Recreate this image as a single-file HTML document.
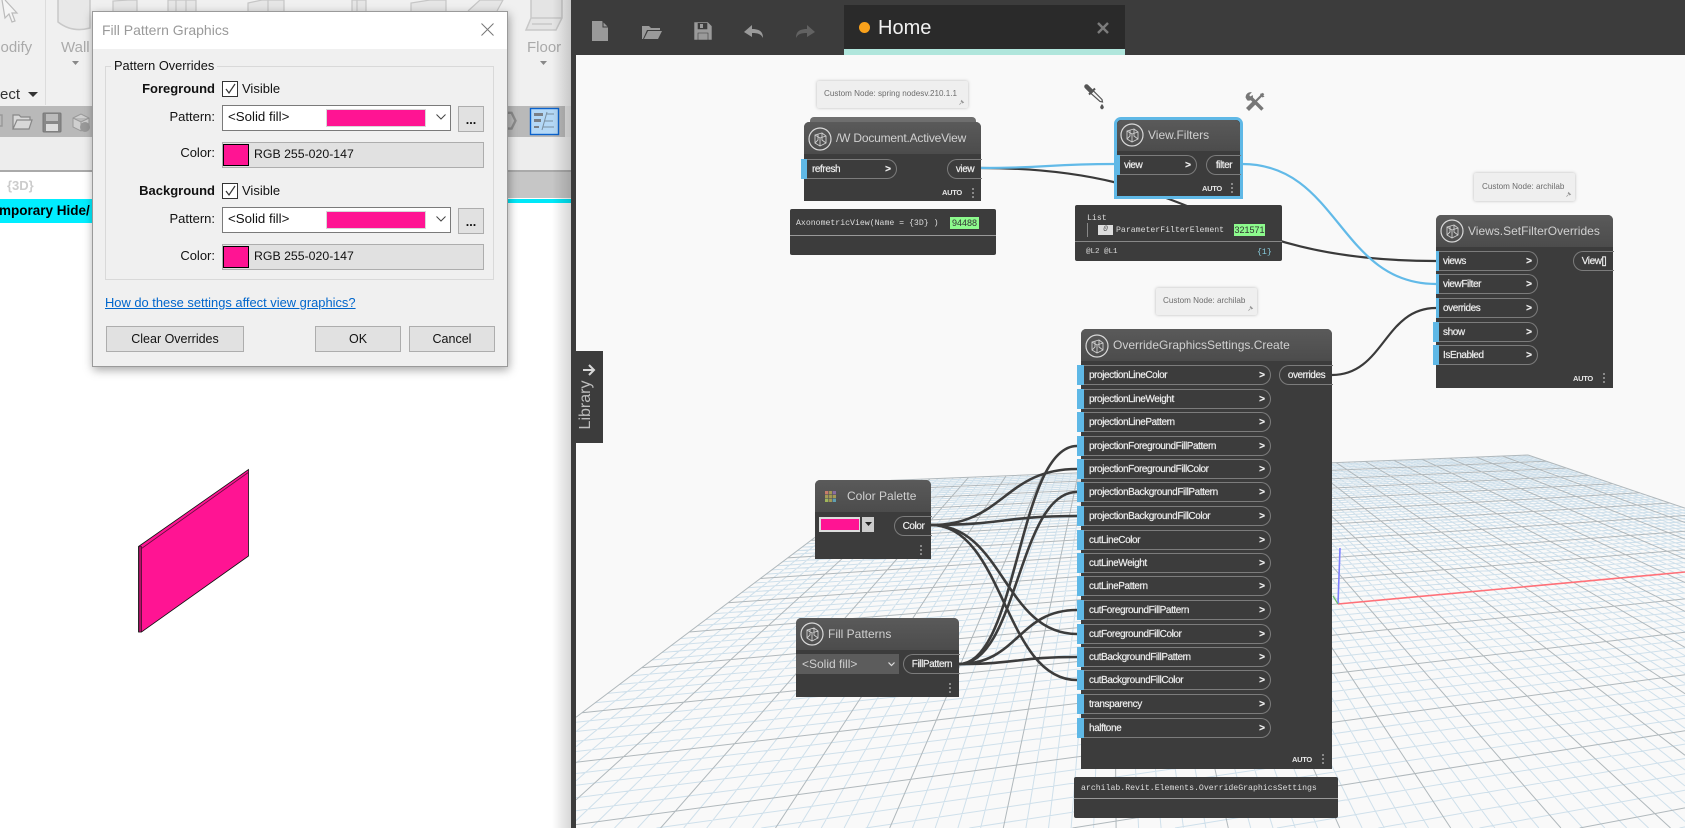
<!DOCTYPE html>
<html><head><meta charset="utf-8"><title>Fill Pattern Graphics</title>
<style>
html,body{margin:0;padding:0;background:#fff;width:1685px;height:828px;overflow:hidden}
#page{position:relative;width:1685px;height:828px;overflow:hidden;background:#fff;font-family:"Liberation Sans",sans-serif}
.a{position:absolute}
.t{position:absolute;white-space:nowrap}
svg{position:absolute;overflow:visible}
/* dialog */
.dl{position:absolute;font-size:12.5px;color:#111;white-space:nowrap;line-height:16px}
.r{right:292px;text-align:right}
.cb{position:absolute;left:129px;width:14px;height:14px;border:1px solid #333;background:#fff}
.combo{position:absolute;left:129px;width:227px;height:24px;background:#fff;border:1px solid #7a7a7a}
.field{position:absolute;left:129px;width:260px;height:24px;background:#e1e1e1;border:1px solid #adadad}
.btn{position:absolute;background:#e1e1e1;border:1px solid #adadad;text-align:center;font-size:12.5px;color:#111;box-sizing:border-box;height:26px;line-height:24px}
/* nodes */
.n{position:absolute;background:#3c3c3c;color:#ddd;border-radius:5px 5px 0 0}
.h{position:absolute;left:0;right:0;top:0;background:linear-gradient(#5a5a5a,#4c4c4c);border-radius:5px 5px 0 0}
.ti{position:absolute;font-size:12px;color:#d0d0d0;white-space:nowrap;line-height:14px}
.p{position:absolute;height:18px;border:1px solid #7c7c7c;border-left:none;border-radius:0 10px 10px 0;font-size:10px;letter-spacing:-.42px;color:#eee;line-height:19px;white-space:nowrap;padding-left:5px;box-sizing:content-box;-webkit-text-stroke:.2px #eee}
.p b{position:absolute;right:5px;top:0;font-weight:bold;font-size:10px;letter-spacing:0}
.o{position:absolute;height:18px;border:1px solid #7c7c7c;border-right:none;border-radius:10px 0 0 10px;font-size:10px;letter-spacing:-.42px;color:#eee;line-height:18px;white-space:nowrap;text-align:center;-webkit-text-stroke:.2px #eee}
.bar{position:absolute;width:6px;height:20px;background:#5fb8e6}
.au{position:absolute;font-size:7.5px;font-weight:bold;color:#e6e6e6;letter-spacing:-.3px}
.dots{position:absolute;width:2px;height:2px;background:#888;box-shadow:0 4px 0 #888,0 8px 0 #888}
.bub{position:absolute;background:#3c3c3c;font-family:"Liberation Mono",monospace;font-size:8.2px;color:#ddd;border-radius:2px}
.tip{position:absolute;background:#efefef;box-shadow:0 0 3px rgba(0,0,0,.25);font-size:8.1px;color:#6c6c6c;white-space:nowrap;border-radius:2px}
.green{position:absolute;background:#8dfb8d;color:#333;font-family:"Liberation Sans",sans-serif;font-size:9px;text-align:center;line-height:12px}
</style></head><body><div id="page">
<svg width="0" height="0" style="position:absolute"><defs>
<symbol id="nico" viewBox="0 0 24 24"><circle cx="12" cy="12" r="11" fill="none" stroke="#d8d8d8" stroke-width="1.2"/><path d="M7 8l7-2 4 3v7l-6 3-5-3zM7 8l5 3v8M12 11l6-2M10 7v6l-3 3M14 6v7l4 3" fill="none" stroke="#cfcfcf" stroke-width=".9"/></symbol>
<symbol id="pin" viewBox="0 0 10 10"><path d="M2 8l2.500-2.500M4 3l3 3M5 2l3 3-1.500.5L4.500 3.500z" stroke="#999" fill="#999" stroke-width="1"/></symbol>
</defs></svg>

<!-- REVIT background -->
<div class="a" style="left:0;top:0;width:572px;height:106px;background:#f0f0f0"></div>
<div class="a" style="left:45px;top:0;width:1px;height:105px;background:#dcdcdc"></div>
<svg class="a" style="left:0;top:0" width="572" height="106">
<path d="M2 0L5 18 9 14 12 22 15 21 12 13 17 13 5 0" fill="#f5f5f5" stroke="#bbb" stroke-width="1.2"/>
<path d="M58 0V22Q72 33 90 28V0" fill="#e8e8e8" stroke="#c8c8c8" stroke-width="1.5"/>
<path d="M113 11V1L128 0 137 0V11M168 11V0H196V11M176 0V11M186 0V11M248 11V3L262 0H284V11M268 0V11M352 11V0H366V11M357 0V11M411 11V3L430 0H446V11M468 11L480 0H503L497 11" fill="#e6e6e6" stroke="#c6c6c6" stroke-width="1.2"/>
<path d="M531 0V18L526 30H556L562 18V0M531 18H562M532 24H552" fill="#e4e4e4" stroke="#c8c8c8" stroke-width="1.5"/>
</svg>
<div class="t" style="left:0;top:39px;font-size:15px;color:#aaa;line-height:18px;margin-left:-12px">Modify</div>
<div class="a" style="left:0;top:30px;width:1px;height:24px;background:#f0f0f0"></div>
<div class="t" style="left:61px;top:39px;font-size:15px;color:#aaa;line-height:18px">Wall</div>
<div class="t" style="left:527px;top:39px;font-size:15px;color:#aaa;line-height:18px">Floor</div>
<div class="t" style="left:0;top:86px;font-size:15px;color:#333;line-height:18px">ect</div>
<svg class="a" style="left:0;top:0" width="572" height="106"><path d="M72 61h7l-3.500 4zM540 61h7l-3.500 4z" fill="#888"/><path d="M28 92h10l-5 5z" fill="#333"/></svg>

<div class="a" style="left:0;top:106px;width:565px;height:31px;background:#b9b9b9"></div>
<div class="a" style="left:0;top:137px;width:572px;height:33px;background:#ededed"></div>
<div class="a" style="left:565px;top:106px;width:7px;height:31px;background:#e5e5e5"></div>
<div class="a" style="left:0;top:170px;width:572px;height:2px;background:#aaa"></div>
<div class="a" style="left:508px;top:172px;width:63px;height:26px;background:#c6c6c6"></div>
<div class="t" style="left:7px;top:177px;font-size:13px;font-weight:bold;color:#ccc;line-height:18px">{3D}</div>
<div class="a" style="left:0;top:199px;width:100px;height:24px;background:#00eeff"></div>
<div class="t" style="left:-1px;top:203px;font-size:13.5px;font-weight:bold;color:#000;line-height:16px">mporary Hide/</div>
<div class="a" style="left:508px;top:199px;width:63px;height:4px;background:#00e8f8"></div>
<svg class="a" style="left:0;top:106px" width="572" height="31">
<path d="M0 9H2V20H0" fill="none" stroke="#999" stroke-width="1.4"/>
<path d="M13 23V9h6l2 2h9v3M13 23l4-9h15l-3 9z" fill="#d8d8d8" stroke="#888" stroke-width="1.2"/>
<rect x="43" y="7" width="18" height="19" rx="1" fill="#888" stroke="#777"/><rect x="46" y="8" width="12" height="7" fill="#bbb"/><rect x="46" y="18" width="12" height="7" fill="#ddd"/>
<path d="M73 12l8-4 8 4v9l-8 4-8-4zM73 12l8 4 8-4M81 16v9" fill="#cfcfcf" stroke="#999"/><circle cx="85" cy="21" r="5" fill="#999"/>
<path d="M509 15l4-8 8 0 4 8-4 8-8 0z" fill="none" stroke="#8c8c8c" stroke-width="2.400" transform="translate(1 0) scale(.98)"/>
<rect x="530.500" y="2.500" width="28" height="26" fill="#b4d8f6" stroke="#0a62cc" stroke-width="1.400"/>
<path d="M534 7h9v3h-9zM534 13h7v3h-7zM534 20h5v2h-5z" fill="#7a7f86"/><path d="M546 8h8M544 15h9M543 21h11M547 6l-5 18" stroke="#7a8fa0" fill="none" stroke-width="1"/>
</svg>
<div class="a" style="left:552px;top:0;width:19px;height:828px;background:linear-gradient(90deg,rgba(0,0,0,0),rgba(0,0,0,.16))"></div>

<!-- pink wall -->
<svg class="a" style="left:0;top:0" width="572" height="828">
<path d="M138.500 546.500L248.500 469.500V556L141.500 632H138.500z" fill="#ff1493" stroke="#111" stroke-width=".8"/>
<path d="M138.800 546.500h2.700V632h-2.700z" fill="#b01068" stroke="#111" stroke-width=".6"/>
<path d="M141.500 548.500L248.200 472.500" fill="none" stroke="#60103c" stroke-width=".8"/>
</svg>

<!-- DIALOG -->
<div class="a" style="left:92px;top:11px;width:416px;height:356px;background:#f0f0f0;border:1px solid #9a9a9a;box-sizing:border-box;box-shadow:1px 3px 9px rgba(0,0,0,.35)">
 <div class="a" style="left:0;top:0;right:0;height:37px;background:#fff"></div>
 <div class="t" style="left:9px;top:9px;font-size:14px;color:#9a9a9a;line-height:18px">Fill Pattern Graphics</div>
 <svg class="a" style="left:388px;top:11px" width="13" height="13"><path d="M.5.500l12 12M12.500.500l-12 12" stroke="#777" stroke-width="1" fill="none"/></svg>
 <div class="a" style="left:12px;top:54px;width:389px;height:214px;border:1px solid #d9d9d9;box-sizing:border-box"></div>
 <div class="dl" style="left:21px;top:46px;background:#f0f0f0;padding:0 3px;font-size:12.8px;margin-left:-3px">Pattern Overrides</div>

 <div class="dl r" style="top:69px;font-weight:bold;font-size:13px">Foreground</div>
 <div class="cb" style="top:69px"></div>
 <svg class="a" style="left:129px;top:69px" width="16" height="16"><path d="M4 8l3 4 6-9" stroke="#333" stroke-width="1.200" fill="none"/></svg>
 <div class="dl" style="left:149px;top:69px;font-size:13px">Visible</div>
 <div class="dl r" style="top:97px;font-size:13px">Pattern:</div>
 <div class="combo" style="top:93px"></div>
 <div class="dl" style="left:135px;top:97px;font-size:13.3px">&lt;Solid fill&gt;</div>
 <div class="a" style="left:234px;top:98px;width:98px;height:16px;background:#ff1493;box-shadow:0 0 0 1px #d8d8d8"></div>
 <svg class="a" style="left:343px;top:102px" width="10" height="6"><path d="M.5.500l4.500 4.500 4.500-4.500" stroke="#444" fill="none"/></svg>
 <div class="btn" style="left:365px;top:94px;width:26px"><span style="position:relative;top:1px;font-weight:bold;letter-spacing:0">...</span></div>
 <div class="dl r" style="top:133px;font-size:13px">Color:</div>
 <div class="field" style="top:130px"></div>
 <div class="a" style="left:130px;top:132px;width:24px;height:20px;background:#ff1493;border:1px solid #000"></div>
 <div class="dl" style="left:161px;top:134px;font-size:12.3px">RGB 255-020-147</div>

 <div class="dl r" style="top:171px;font-weight:bold;font-size:13px">Background</div>
 <div class="cb" style="top:171px"></div>
 <svg class="a" style="left:129px;top:171px" width="16" height="16"><path d="M4 8l3 4 6-9" stroke="#333" stroke-width="1.200" fill="none"/></svg>
 <div class="dl" style="left:149px;top:171px;font-size:13px">Visible</div>
 <div class="dl r" style="top:199px;font-size:13px">Pattern:</div>
 <div class="combo" style="top:195px"></div>
 <div class="dl" style="left:135px;top:199px;font-size:13.3px">&lt;Solid fill&gt;</div>
 <div class="a" style="left:234px;top:200px;width:98px;height:16px;background:#ff1493;box-shadow:0 0 0 1px #d8d8d8"></div>
 <svg class="a" style="left:343px;top:204px" width="10" height="6"><path d="M.5.500l4.500 4.500 4.500-4.500" stroke="#444" fill="none"/></svg>
 <div class="btn" style="left:365px;top:196px;width:26px"><span style="position:relative;top:1px;font-weight:bold">...</span></div>
 <div class="dl r" style="top:236px;font-size:13px">Color:</div>
 <div class="field" style="top:232px"></div>
 <div class="a" style="left:130px;top:234px;width:24px;height:20px;background:#ff1493;border:1px solid #000"></div>
 <div class="dl" style="left:161px;top:236px;font-size:12.3px">RGB 255-020-147</div>

 <div class="dl" style="left:12px;top:283px;color:#0066cc;text-decoration:underline;font-size:12.9px">How do these settings affect view graphics?</div>
 <div class="btn" style="left:13px;top:314px;width:138px">Clear Overrides</div>
 <div class="btn" style="left:222px;top:314px;width:86px">OK</div>
 <div class="btn" style="left:316px;top:314px;width:86px">Cancel</div>
</div>

<!-- DYNAMO -->
<div class="a" style="left:571px;top:0;width:1114px;height:55px;background:#3c3c3c"></div>
<div class="a" style="left:571px;top:0;width:5px;height:828px;background:#3c3c3c"></div>
<div class="a" id="canvas" style="left:576px;top:55px;width:1109px;height:773px;background:#f9f9f9;overflow:hidden">
 <svg id="grid" style="left:-576px;top:-55px;overflow:hidden" width="1685" height="828"></svg>
</div>
<div class="a" style="left:844px;top:5px;width:281px;height:44px;background:#2a2a2a"></div>
<div class="a" style="left:844px;top:49px;width:281px;height:6px;background:#b0e6dc"></div>
<div class="a" style="left:859px;top:22px;width:11px;height:11px;border-radius:50%;background:#f9a11b"></div>
<div class="t" style="left:878px;top:16px;font-size:20px;color:#f2f2f2;line-height:24px">Home</div>
<svg class="a" style="left:1097px;top:22px" width="12" height="12"><path d="M1 1l10 10M11 1L1 11" stroke="#7c7c7c" stroke-width="2.400"/></svg>
<svg class="a" style="left:585px;top:15px" width="240" height="32">
<path d="M7 6h10l6 6v14H7z" fill="#9a9a9a"/><path d="M18 6v6h5" fill="none" stroke="#3c3c3c" stroke-width="1"/>
<path d="M57 24V11h7l2 2h9v2H62l-4 9zM59 24l4-8h14l-4 8z" fill="#9a9a9a"/>
<path d="M109 7h14l4 4v14h-18zM113 8v6h9V8M113 18h10v7h-10z" fill="#9a9a9a" stroke="#3c3c3c" stroke-width=".6"/><rect x="115" y="9" width="3" height="4" fill="#9a9a9a"/>
<path d="M159 17l8-7v4c8 0 11 3 11 9-2-4-5-5-11-5v4z" fill="#9a9a9a"/>
<path d="M230 17l-8-7v4c-8 0-11 3-11 9 2-4 5-5 11-5v4z" fill="#626262"/>
</svg>

<!-- wires -->
<svg class="a" style="left:0;top:0" width="1685" height="828" fill="none">
<path d="M981 168C1208 168 1208 261 1436 261" stroke="#3a3a3a" stroke-width="2.200"/>
<path d="M1332 375C1384 375 1384 308 1436 308" stroke="#3a3a3a" stroke-width="2.200"/>
<path d="M981 168C1048 168 1048 164 1114 164" stroke="#62bae8" stroke-width="2.200"/>
<path d="M1242 164C1339 164 1339 284 1436 284" stroke="#62bae8" stroke-width="2.200"/>
<g stroke="#3c3c3c" stroke-width="2.600">
<path d="M931 525C1004 525 1004 469 1077 469"/>
<path d="M931 525C1004 525 1004 516 1077 516"/>
<path d="M931 525C1004 525 1004 634 1077 634"/>
<path d="M931 525C1004 525 1004 680 1077 680"/>
<path d="M959 664C1018 664 1018 446 1077 446"/>
<path d="M959 664C1018 664 1018 492 1077 492"/>
<path d="M959 664C1018 664 1018 610 1077 610"/>
<path d="M959 664C1018 664 1018 657 1077 657"/>
</g>
</svg>

<!-- tooltips + tools -->
<div class="tip" style="left:817px;top:81px;width:151px;height:27px"><span class="t" style="left:7px;top:8px">Custom Node: spring nodesv.210.1.1</span><svg style="right:3px;bottom:2px" width="7" height="7"><use href="#pin"/></svg></div>
<div class="tip" style="left:1474px;top:173px;width:101px;height:28px"><span class="t" style="left:8px;top:9px">Custom Node: archilab</span><svg style="right:3px;bottom:3px" width="7" height="7"><use href="#pin"/></svg></div>
<div class="tip" style="left:1156px;top:288px;width:101px;height:27px"><span class="t" style="left:7px;top:8px">Custom Node: archilab</span><svg style="right:3px;bottom:3px" width="7" height="7"><use href="#pin"/></svg></div>
<svg class="a" style="left:1084px;top:84px" width="24" height="28" fill="none">
<path d="M2.500 2.500L7 7" stroke="#555" stroke-width="4.500" stroke-linecap="round"/>
<path d="M5 10.500L11 4.500" stroke="#555" stroke-width="2"/>
<path d="M7 9.500L9.500 7 18 15.500 18.500 18 16 17.500z" fill="#f5f5f5" stroke="#555" stroke-width="1.200"/>
<path d="M18 20c2 2.500 2.800 4 0 5.500-2.800-1.500-2-3 0-5.500z" fill="#555"/>
</svg>
<svg class="a" style="left:1245px;top:92px" width="20" height="20" fill="none">
<path d="M5.500 5.500L17.500 17.500" stroke="#777" stroke-width="3.400"/>
<path d="M1 5.500c0-3 2-5 5-5L3.800 3 5 5 7.500 3.700C8 6.800 5 9 2.500 8z" fill="#777" stroke="#777" stroke-width=".8"/>
<path d="M18.500 1.500L8 12" stroke="#777" stroke-width="2.200"/>
<path d="M9.500 10.500L2.500 17.500" stroke="#777" stroke-width="4.200"/>
<path d="M16 1l3.500 3.500-2 1-2.500-2.500z" fill="#777"/>
</svg>

<!-- Document.ActiveView -->
<div class="a" style="left:810px;top:117px;width:166px;height:6px;background:#6e6e6e;border-radius:4px 4px 0 0"></div>
<div class="n" style="left:804px;top:122px;width:177px;height:79px">
 <div class="h" style="height:32px"></div>
 <svg style="left:4px;top:5px" width="24" height="24"><use href="#nico"/></svg>
 <div class="ti" style="left:32px;top:9px;letter-spacing:-.2px">/W Document.ActiveView</div>
 <div class="p" style="left:3px;top:37px;width:84px">refresh<b>&gt;</b></div>
 <div class="o" style="left:143px;top:37px;width:34px;padding-top:1px;height:17px">view</div>
 <div class="au" style="left:138px;top:66px">AUTO</div>
 <div class="dots" style="left:168px;top:66px"></div>
</div>
<div class="bar" style="left:801px;top:159px"></div>
<div class="bub" style="left:790px;top:209px;width:206px;height:46px">
 <span class="t" style="left:6px;top:10px">AxonometricView(Name = {3D} )</span>
 <div class="green" style="left:160px;top:8px;width:29px;height:12px">94488</div>
 <div class="a" style="left:0;right:0;top:26px;height:1px;background:#999"></div>
</div>

<!-- View.Filters -->
<div class="n" style="left:1114px;top:117px;width:123px;height:76px;border:3px solid #5fb8e6;border-radius:7px 7px 0 0">
 <div class="h" style="height:31px"></div>
 <svg style="left:3px;top:3px" width="24" height="24"><use href="#nico"/></svg>
 <div class="ti" style="left:31px;top:8px">View.Filters</div>
 <div class="p" style="left:3px;top:35px;width:72px;padding-left:4px">view<b>&gt;</b></div>
 <div class="o" style="left:89px;top:35px;width:34px;height:17px;padding-top:1px">filter</div>
 <div class="au" style="left:85px;top:64px">AUTO</div>
 <div class="dots" style="left:114px;top:63px"></div>
</div>
<div class="bar" style="left:1117px;top:155px;width:3px"></div>
<div class="bub" style="left:1075px;top:205px;width:207px;height:56px">
 <span class="t" style="left:12px;top:9px">List</span>
 <div class="a" style="left:12px;top:18px;width:1px;height:14px;background:#888"></div>
 <div class="a" style="left:23px;top:20px;width:15px;height:10px;background:#ddd;color:#555;font-size:8px;line-height:10px;text-align:center;font-style:italic">0</div>
 <span class="t" style="left:41px;top:21px">ParameterFilterElement</span>
 <div class="green" style="left:159px;top:19px;width:31px;height:12px">321571</div>
 <div class="a" style="left:0;right:0;top:36px;height:1px;background:#888"></div>
 <span class="t" style="left:11px;top:43px;font-size:7.5px">@L2 @L1</span>
 <span class="t" style="left:182px;top:43px;color:#8cd">{1}</span>
</div>

<!-- Views.SetFilterOverrides -->
<div class="n" style="left:1436px;top:215px;width:177px;height:173px">
 <div class="h" style="height:32px"></div>
 <svg style="left:4px;top:4px" width="24" height="24"><use href="#nico"/></svg>
 <div class="ti" style="left:32px;top:9px">Views.SetFilterOverrides</div>
 <div class="p" style="left:2px;top:36px;width:94px">views<b>&gt;</b></div>
 <div class="p" style="left:2px;top:59px;width:94px">viewFilter<b>&gt;</b></div>
 <div class="p" style="left:2px;top:83px;width:94px">overrides<b>&gt;</b></div>
 <div class="p" style="left:2px;top:107px;width:94px">show<b>&gt;</b></div>
 <div class="p" style="left:2px;top:130px;width:94px">IsEnabled<b>&gt;</b></div>
 <div class="o" style="left:137px;top:36px;width:40px;height:17px;padding-top:1px">View[]</div>
 <div class="au" style="left:137px;top:159px">AUTO</div>
 <div class="dots" style="left:167px;top:158px"></div>
</div>
<div class="bar" style="left:1436px;top:251px;width:3px"></div>
<div class="bar" style="left:1436px;top:274px;width:3px"></div>
<div class="bar" style="left:1436px;top:298px;width:3px"></div>
<div class="bar" style="left:1433px;top:322px"></div>
<div class="bar" style="left:1433px;top:345px"></div>

<!-- OverrideGraphicsSettings.Create -->
<div class="n" style="left:1081px;top:329px;width:251px;height:440px">
 <div class="h" style="height:32px"></div>
 <svg style="left:4px;top:5px" width="24" height="24"><use href="#nico"/></svg>
 <div class="ti" style="left:32px;top:9px">OverrideGraphicsSettings.Create</div>
 <div class="p" style="left:3px;top:36px;width:181px">projectionLineColor<b>&gt;</b></div>
 <div class="p" style="left:3px;top:60px;width:181px">projectionLineWeight<b>&gt;</b></div>
 <div class="p" style="left:3px;top:83px;width:181px">projectionLinePattern<b>&gt;</b></div>
 <div class="p" style="left:3px;top:107px;width:181px">projectionForegroundFillPattern<b>&gt;</b></div>
 <div class="p" style="left:3px;top:130px;width:181px">projectionForegroundFillColor<b>&gt;</b></div>
 <div class="p" style="left:3px;top:153px;width:181px">projectionBackgroundFillPattern<b>&gt;</b></div>
 <div class="p" style="left:3px;top:177px;width:181px">projectionBackgroundFillColor<b>&gt;</b></div>
 <div class="p" style="left:3px;top:201px;width:181px">cutLineColor<b>&gt;</b></div>
 <div class="p" style="left:3px;top:224px;width:181px">cutLineWeight<b>&gt;</b></div>
 <div class="p" style="left:3px;top:247px;width:181px">cutLinePattern<b>&gt;</b></div>
 <div class="p" style="left:3px;top:271px;width:181px">cutForegroundFillPattern<b>&gt;</b></div>
 <div class="p" style="left:3px;top:295px;width:181px">cutForegroundFillColor<b>&gt;</b></div>
 <div class="p" style="left:3px;top:318px;width:181px">cutBackgroundFillPattern<b>&gt;</b></div>
 <div class="p" style="left:3px;top:341px;width:181px">cutBackgroundFillColor<b>&gt;</b></div>
 <div class="p" style="left:3px;top:365px;width:181px">transparency<b>&gt;</b></div>
 <div class="p" style="left:3px;top:389px;width:181px">halftone<b>&gt;</b></div>
 <div class="o" style="left:198px;top:36px;width:53px;height:17px;padding-top:1px">overrides</div>
 <div class="au" style="left:211px;top:426px">AUTO</div>
 <div class="dots" style="left:241px;top:425px"></div>
</div>
<div id="bars"></div>
<div class="bub" style="left:1074px;top:777px;width:264px;height:41px">
 <span class="t" style="left:7px;top:7px">archilab.Revit.Elements.OverrideGraphicsSettings</span>
 <div class="a" style="left:0;right:0;top:21px;height:1px;background:#999"></div>
</div>

<!-- Color Palette -->
<div class="n" style="left:815px;top:480px;width:116px;height:79px">
 <div class="h" style="height:32px"></div>
 <svg style="left:10px;top:11px" width="11" height="11">
  <rect width="11" height="11" fill="#a59a55"/><rect width="4" height="4" fill="#c77c6a"/><rect x="7" width="4" height="4" fill="#8a6ca0"/><rect y="7" width="4" height="4" fill="#9fb55a"/><rect x="7" y="7" width="4" height="4" fill="#5f9fb0"/>
  <path d="M3.700 0v11M7.300 0v11M0 3.700h11M0 7.300h11" stroke="#555" stroke-width=".7"/>
 </svg>
 <div class="ti" style="left:32px;top:9px">Color Palette</div>
 <div class="a" style="left:4px;top:37px;width:41px;height:15px;background:#ddd;border:0"></div>
 <div class="a" style="left:6px;top:39px;width:38px;height:11px;background:#ff1493"></div>
 <div class="a" style="left:47px;top:37px;width:12px;height:15px;background:#ccc"></div>
 <svg style="left:50px;top:42px" width="7" height="5"><path d="M0 0h7L3.500 4z" fill="#222"/></svg>
 <div class="o" style="left:79px;top:36px;width:37px;height:17px;padding-top:1px">Color</div>
 <div class="dots" style="left:105px;top:65px"></div>
</div>

<!-- Fill Patterns -->
<div class="n" style="left:796px;top:618px;width:163px;height:79px">
 <div class="h" style="height:32px"></div>
 <svg style="left:4px;top:4px" width="24" height="24"><use href="#nico"/></svg>
 <div class="ti" style="left:32px;top:9px">Fill Patterns</div>
 <div class="a" style="left:0;top:36px;width:103px;height:20px;background:#5c5c5c"></div>
 <div class="t" style="left:6px;top:38px;font-size:12px;color:#d0d0d0;line-height:16px">&lt;Solid fill&gt;</div>
 <svg style="left:92px;top:44px" width="7" height="5"><path d="M.5.500L3.500 3.500 6.500.500" stroke="#ddd" fill="none" stroke-width="1.200"/></svg>
 <div class="o" style="left:107px;top:36px;width:56px;height:17px;padding-top:1px">FillPattern</div>
 <div class="dots" style="left:153px;top:65px"></div>
</div>

<!-- Library -->
<div class="a" style="left:576px;top:351px;width:27px;height:92px;background:#3c3c3c"></div>
<div class="t" style="left:586px;top:405px;font-size:16px;color:#bdbdbd;line-height:18px;transform:translate(-50%,-50%) rotate(-90deg)">Library</div>
<svg class="a" style="left:582px;top:364px" width="14" height="12"><path d="M1 6h11M7 1l5 5-5 5" stroke="#d8d8d8" stroke-width="2" fill="none"/></svg>

<script>
(function(){
 var F=[1528,455],V1=[4058,354],V2=[1112,314],A=.01006,B=.0423,NS='http://www.w3.org/2000/svg';
 var X0=576,Y0=55,X1=1685,Y1=828;
 function P(p,q){var d=1-p*A-q*B;return[(F[0]-p*A*V1[0]-q*B*V2[0])/d,(F[1]-p*A*V1[1]-q*B*V2[1])/d];}
 function clip(a,b){
  var t0=0,t1=1,dx=b[0]-a[0],dy=b[1]-a[1],ps=[-dx,dx,-dy,dy],qs=[a[0]-X0,X1-a[0],a[1]-Y0,Y1-a[1]];
  for(var k=0;k<4;k++){
   if(ps[k]===0){if(qs[k]<0)return '';continue;}
   var r=qs[k]/ps[k];
   if(ps[k]<0){if(r>t1)return '';if(r>t0)t0=r;}else{if(r<t0)return '';if(r<t1)t1=r;}
  }
  return 'M'+(a[0]+t0*dx).toFixed(1)+' '+(a[1]+t0*dy).toFixed(1)+'L'+(a[0]+t1*dx).toFixed(1)+' '+(a[1]+t1*dy).toFixed(1);
 }
 var g=document.getElementById('grid'),mi='',ma='';
 for(var i=0;i<=100;i++){
  var v=i/5,qe=Math.min(20,(.97-v*A)/B),pe=Math.min(20,(.97-v*B)/A);
  var s=clip(P(v,0),P(v,qe))+clip(P(0,v),P(pe,v));
  if(i%5==0)ma+=s;else mi+=s;
 }
 function add(d,col,w){var x=document.createElementNS(NS,'path');x.setAttribute('d',d);x.setAttribute('stroke',col);x.setAttribute('stroke-width',w);x.setAttribute('fill','none');g.appendChild(x);}
 add(mi,'#cfe0eb',1);add(ma,'#b0b8bc',1);
 add('M1338 604L1685 572','#ff7078',1.6);
 add('M1338 604L1340 548','#8080ff',1.6);
 add('M1338 604L1333 596','#70c070',1.2);
 var ys=[365,389,412,436,459,482,506,530,553,576,600,624,647,670,694,718],h='';
 ys.forEach(function(y){h+='<div class="bar" style="left:1077px;top:'+y+'px;width:7px"></div>';});
 document.getElementById('bars').innerHTML=h;
})();
</script>
</div></body></html>
